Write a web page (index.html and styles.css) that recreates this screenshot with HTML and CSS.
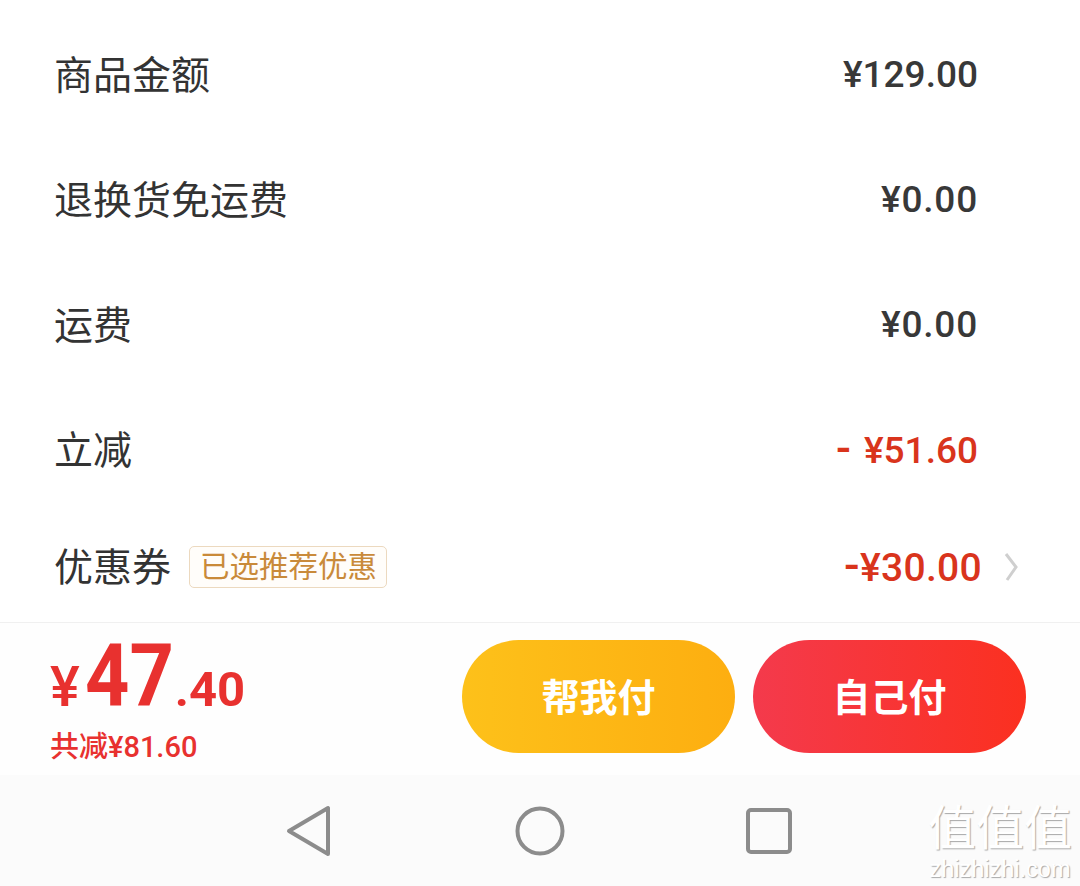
FILE: index.html
```html
<!DOCTYPE html>
<html lang="zh-CN">

<head>
    <meta charset="UTF-8">
    <title>确认订单</title>
    <link rel="stylesheet" href="styles.css">
</head>

<body>
    <div class="page">
        <ul class="fee-list">
            <li class="fee-row">
                <span class="fee-name">商品金额</span>
                <span class="fee-value">¥129.00</span>
            </li>
            <li class="fee-row">
                <span class="fee-name">退换货免运费</span>
                <span class="fee-value fee-wide">¥0.00</span>
            </li>
            <li class="fee-row">
                <span class="fee-name">运费</span>
                <span class="fee-value fee-wide">¥0.00</span>
            </li>
            <li class="fee-row">
                <span class="fee-name">立减</span>
                <span class="fee-value fee-cut"><span class="cut-sign">-</span>¥51.60</span>
            </li>
            <li class="fee-row coupon-row">
                <span class="fee-name">优惠券</span>
                <span class="coupon-tag">已选推荐优惠</span>
                <span class="fee-value fee-cut coupon-value"><span class="coupon-sign">-</span>¥30.00</span>
                <svg class="chevron" width="14" height="30" viewBox="0 0 14 30">
                    <path d="M2 2 L12 15 L3 28" fill="none" stroke="#cfcfcf" stroke-width="3" />
                </svg>
            </li>
        </ul>

        <div class="pay-bar">
            <div class="price">
                <div class="price-total"><span class="price-yen">¥</span><span class="price-int">47</span><span class="price-dec">.40</span></div>
                <div class="price-saved">共减¥81.60</div>
            </div>
            <div class="pay-buttons">
                <button class="pay-btn btn-friend">帮我付</button>
                <button class="pay-btn btn-self">自己付</button>
            </div>
        </div>

        <div class="nav-bar">
            <svg width="46" height="52" viewBox="0 0 46 52">
                <path d="M42 3 L42 49 L3 26 Z" fill="none" stroke="#8c8c8c" stroke-width="4" stroke-linejoin="round" />
            </svg>
            <svg class="nav-home" width="50" height="50" viewBox="0 0 50 50">
                <circle cx="25" cy="25" r="22.5" fill="none" stroke="#8c8c8c" stroke-width="4" />
            </svg>
            <svg width="46" height="46" viewBox="0 0 46 46">
                <rect x="2" y="2" width="42" height="42" rx="3" fill="none" stroke="#8c8c8c" stroke-width="4" />
            </svg>
        </div>

        <div class="watermark">
            <div class="wm-mark">值值值</div>
            <div class="wm-site">zhizhizhi.com</div>
        </div>
    </div>
</body>

</html>
```

FILE: styles.css
```css
* {
    box-sizing: border-box;
}

body {
    margin: 0;
    background-color: #ffffff;
    font-family: "Roboto", "Noto Sans CJK SC", sans-serif;
}

.page {
    position: relative;
    width: 1080px;
    height: 886px;
    overflow: hidden;
}

.fee-list {
    list-style-type: none;
    margin: 0;
    padding: 12px 0 0;
}

.fee-row {
    display: flex;
    align-items: center;
    height: 125px;
    padding: 0 102px 0 54px;
}

.fee-name {
    margin-bottom: 6px;
    font-size: 39px;
    color: #333333;
}

.fee-value {
    margin-left: auto;
    font-size: 37px;
    line-height: 44px;
    font-weight: 500;
    color: #383838;
}

.fee-wide {
    letter-spacing: 0.8px;
}

.fee-cut {
    color: #d9341c;
}

.cut-sign {
    margin-right: 13px;
    font-size: 44px;
    line-height: 1;
}

.coupon-row {
    height: 110px;
    padding-right: 62px;
}

.coupon-tag {
    margin-left: 18px;
    margin-top: -1px;
    padding: 0 9px 0 10px;
    height: 42px;
    line-height: 40px;
    font-size: 29.5px;
    color: #c98a3a;
    background-color: #fffdfa;
    border: 1px solid #ecd9bf;
    border-radius: 5px;
}

.coupon-value {
    margin-top: -3px;
    font-size: 39px;
    letter-spacing: 0.3px;
}

.coupon-sign {
    font-size: 46px;
    line-height: 1;
}

.chevron {
    margin-left: 22px;
}

.pay-bar {
    display: flex;
    justify-content: space-between;
    height: 153px;
    padding: 17px 54px 0 50px;
    border-top: 1px solid #f0f0f0;
    background-color: #fefefe;
}

.price {
    color: #e8312f;
}

.price-total {
    height: 76px;
    line-height: 72px;
    font-weight: 700;
    white-space: nowrap;
}

.price-yen {
    font-size: 56px;
    font-weight: 500;
}

.price-int {
    display: inline-block;
    margin: 0 -11px 0 5px;
    font-size: 88px;
    transform: scaleX(0.88);
    transform-origin: left center;
}

.price-dec {
    font-size: 49px;
}

.price-saved {
    margin-top: 13px;
    font-size: 29px;
    font-weight: 500;
    line-height: 36px;
}

.pay-buttons {
    display: flex;
    gap: 18px;
}

.pay-btn {
    width: 273px;
    height: 113px;
    padding: 0 0 4px;
    border: 0;
    border-radius: 57px;
    font-family: "Noto Sans CJK SC", sans-serif;
    font-size: 38px;
    font-weight: 700;
    color: #ffffff;
}

.btn-friend {
    background: linear-gradient(90deg, #fdc11a, #fdae10);
}

.btn-self {
    background: linear-gradient(90deg, #f43a4c, #fb3020);
}

.nav-bar {
    display: flex;
    align-items: center;
    justify-content: space-between;
    height: 111px;
    padding: 0 288px 0 286px;
    background-color: #fbfbfb;
}

.nav-home {
    margin-left: 2px;
}

.watermark {
    position: absolute;
    right: 8px;
    bottom: 3px;
    text-align: center;
    color: #ffffff;
    text-shadow: 1px 1px 1px #a8a8a8;
}

.wm-mark {
    font-family: "Liberation Sans", "Noto Sans CJK SC", sans-serif;
    font-size: 48px;
    line-height: 55px;
}

.wm-site {
    font-family: "Liberation Sans", sans-serif;
    font-size: 23.5px;
    line-height: 27px;
}
```
